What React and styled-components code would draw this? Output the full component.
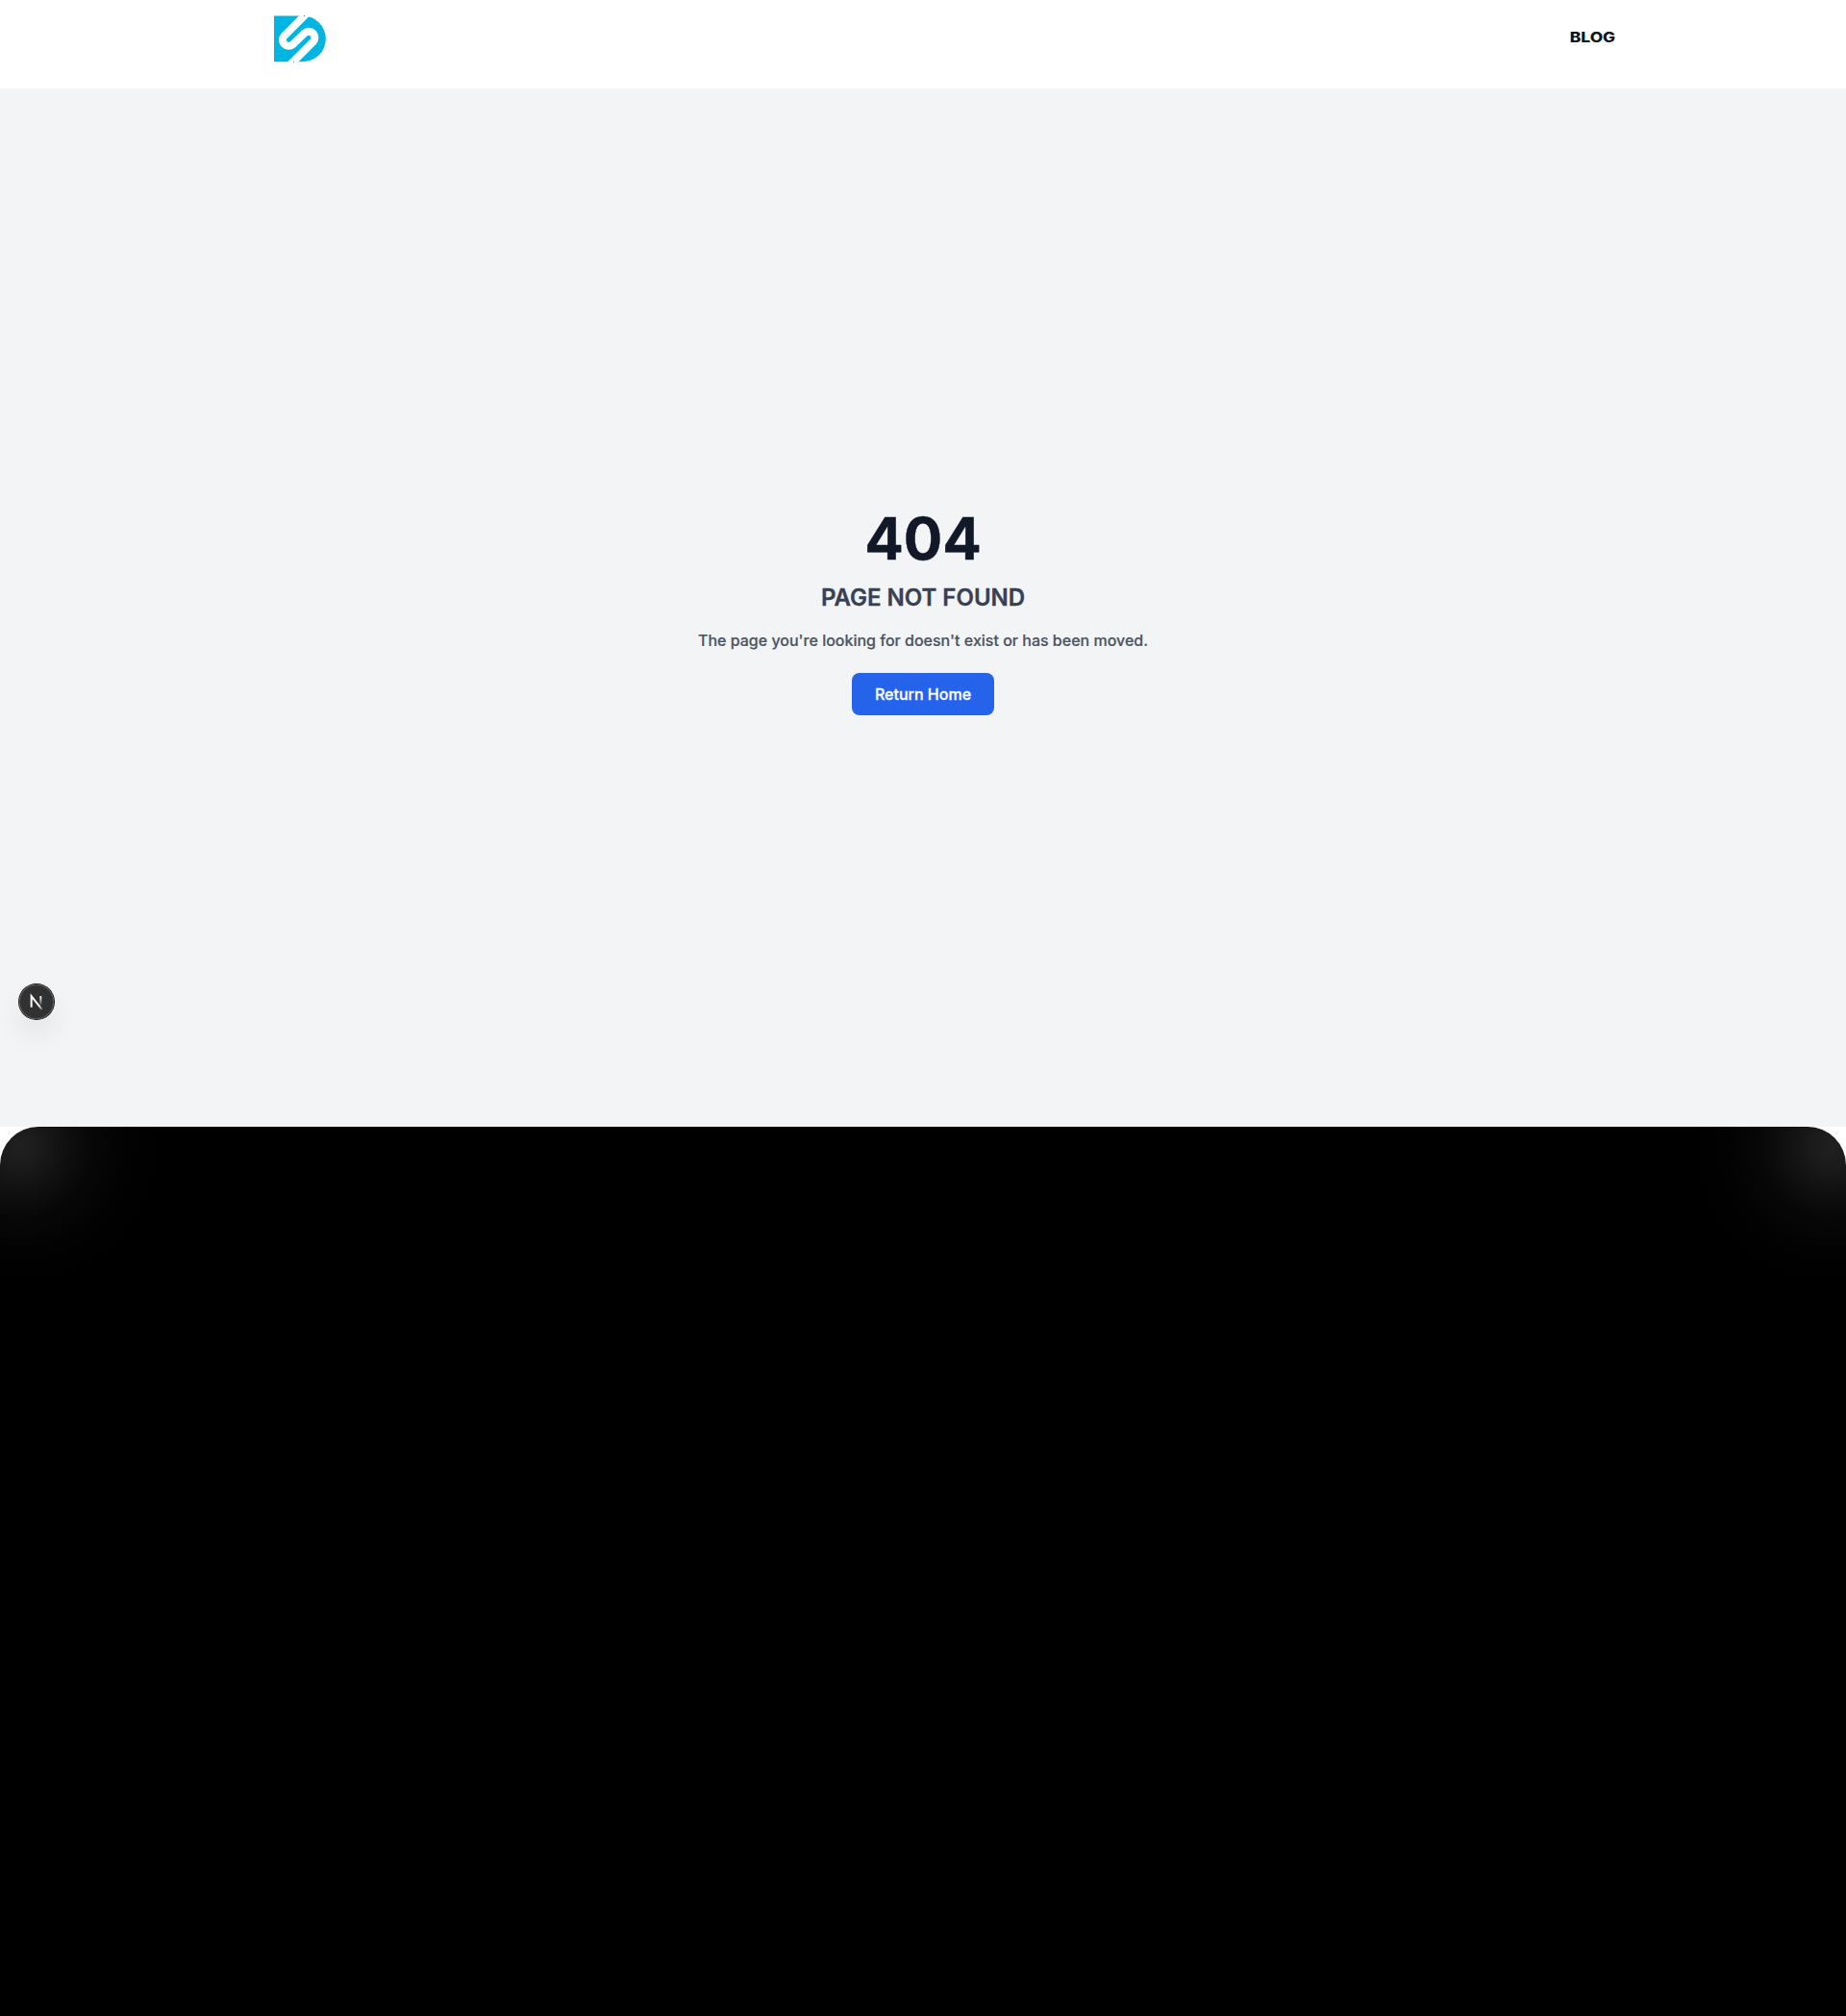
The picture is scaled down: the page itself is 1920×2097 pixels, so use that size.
import React from "react";
import styled, { createGlobalStyle } from "styled-components";

const Global = createGlobalStyle`
  * { box-sizing: border-box; }
  body { margin: 0; background: #fff; font-family: Inter, "Liberation Sans", sans-serif; -webkit-font-smoothing: antialiased; }
  h1, h2, p { margin: 0; }
`;
const Page = styled.div`
  display: flex;
  flex-direction: column;
  min-height: 2097px;
`;
const Header = styled.header`
  height: 92px;
  padding: 16px 240px 0 285px;
  display: flex;
  justify-content: space-between;
  align-items: flex-start;
  background: #fff;
`;
const Logo = styled.svg`
  display: block;
  width: 55px;
  height: 49px;
`;
const NavLink = styled.a`
  margin-top: 11px;
  font-size: 14px;
  line-height: 24px;
  font-weight: 800;
  color: #0b161c;
  text-decoration: none;
  transform: scaleX(1.24);
  transform-origin: right center;
`;
const Main = styled.main`
  height: 1080px;
  display: flex;
  flex-direction: column;
  align-items: center;
  justify-content: center;
  background: #f3f4f6;
  text-align: center;
`;
const Code = styled.h1`
  font-size: 60px;
  line-height: 80px;
  font-weight: 700;
  color: #111827;
  -webkit-text-stroke: 0.4px;
`;
const Title = styled.h2`
  margin-top: 6px;
  font-size: 24px;
  line-height: 32px;
  font-weight: 600;
  color: #374151;
  -webkit-text-stroke: 0.35px;
`;
const Message = styled.p`
  margin-top: 16px;
  font-size: 16px;
  line-height: 24px;
  font-weight: 500;
  color: #4b5563;
  -webkit-text-stroke: 0.2px;
`;
const HomeButton = styled.a`
  margin-top: 22px;
  height: 44px;
  padding: 0 24px;
  display: flex;
  align-items: center;
  border-radius: 8px;
  background: #2563eb;
  color: #fff;
  font-size: 16px;
  line-height: 24px;
  font-weight: 500;
  text-decoration: none;
  -webkit-text-stroke: 0.3px;
`;
const glow = "#202020 0, #1b1b1b 20px, #101010 48px, #070707 75px, #020202 110px, transparent 155px";
const Footer = styled.footer`
  flex: 1;
  border-radius: 40px 40px 0 0;
  background:
    radial-gradient(circle at 20px 20px, ${glow}),
    radial-gradient(circle at calc(100% - 15px) 20px, ${glow}),
    #000;
`;
const DevBadge = styled.button`
  position: fixed;
  left: 20px;
  top: 1024px;
  width: 36px;
  height: 36px;
  padding: 0;
  border: 0;
  border-radius: 50%;
  background: rgba(0, 0, 0, 0.8);
  box-shadow: 0 0 0 1px #171717, inset 0 0 0 1px hsla(0, 0%, 100%, 0.14), 0 16px 32px -8px rgba(0, 0, 0, 0.24);
  display: flex;
  align-items: center;
  justify-content: center;
`;
const BadgeMark = styled.svg`
  flex: none;
  width: 40px;
  height: 40px;
`;

export default function App() {
  return (
    <Page>
      <Global />
      <Header>
        <Logo viewBox="0 -1.5 165 147" aria-label="Logo">
          <path d="M0 0H90A71.5 71.5 0 0 1 90 143H0Z" fill="#00b5e2" />
          <path
            d="M114 -20L31.6 62.6A19 19 0 0 0 58.4 89.4L95.6 53.6A19 19 0 0 1 122.4 80.4L40 163"
            fill="none"
            stroke="#fff"
            strokeWidth="24"
          />
          <path d="M93 0H96M60 143H63" stroke="#123f4d" strokeWidth="2" />
        </Logo>
        <NavLink>BLOG</NavLink>
      </Header>
      <Main>
        <Code>404</Code>
        <Title>PAGE NOT FOUND</Title>
        <Message>The page you're looking for doesn't exist or has been moved.</Message>
        <HomeButton>Return Home</HomeButton>
      </Main>
      <Footer />
      <DevBadge aria-label="Open developer tools">
        <BadgeMark viewBox="0 0 40 40" fill="none">
          <defs>
            <linearGradient id="diag" x1="9.95555" y1="11.1226" x2="15.4778" y2="17.9671" gradientUnits="userSpaceOnUse">
              <stop stopColor="#fff" />
              <stop offset="0.85" stopColor="#fff" stopOpacity="0" />
            </linearGradient>
            <linearGradient id="stem" x1="11.8222" y1="1.40039" x2="11.791" y2="11.5" gradientUnits="userSpaceOnUse">
              <stop stopColor="#fff" />
              <stop offset="1" stopColor="#fff" stopOpacity="0" />
            </linearGradient>
          </defs>
          <g transform="translate(12.5 13)" strokeWidth="2">
            <path d="M13.1 15L2.14 1.2V12.8" stroke="url(#diag)" />
            <path d="M11.825 1.2V13.1" stroke="url(#stem)" />
          </g>
        </BadgeMark>
      </DevBadge>
    </Page>
  );
}
